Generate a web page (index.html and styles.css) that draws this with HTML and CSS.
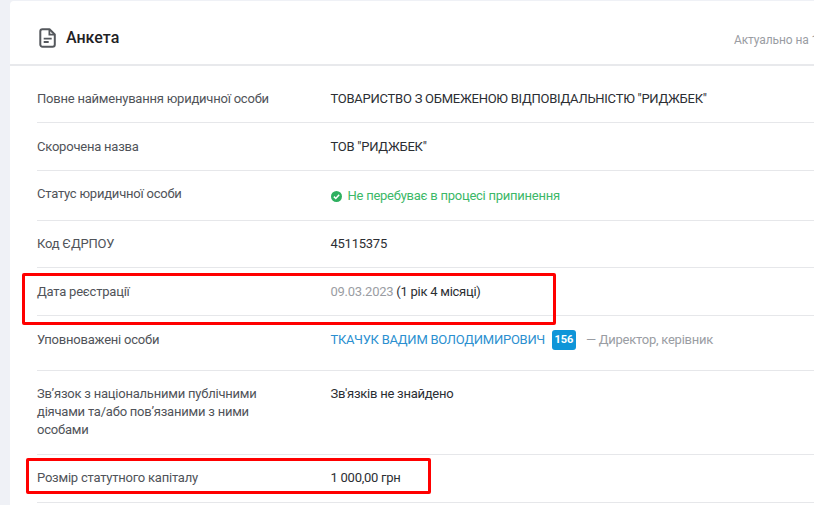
FILE: index.html
```html
<!DOCTYPE html>
<html lang="uk">
<head>
<meta charset="utf-8">
<title>Анкета</title>
<link rel="stylesheet" href="styles.css">
</head>
<body>
<main class="card">
  <header class="card-head">
    <div class="title">
      <svg class="doc-icon" width="18" height="20" viewBox="0 0 18 20" aria-hidden="true">
        <path d="M3.5 1.2h7l5.3 5.3v10.1c0 1.2-1 2.2-2.2 2.2H3.5c-1.2 0-2.2-1-2.2-2.2V3.4c0-1.2 1-2.2 2.2-2.2z" fill="none" stroke="#55585d" stroke-width="2" stroke-linejoin="round"/>
        <path d="M10.4 1.5v5.2h5.2" fill="none" stroke="#55585d" stroke-width="1.8"/>
        <path d="M4.7 10.6h8M4.7 14h5" fill="none" stroke="#55585d" stroke-width="1.8"/>
      </svg>
      <h1>Анкета</h1>
    </div>
    <span class="actual">Актуально на 12.07.2024</span>
  </header>
  <div class="rows">
    <div class="row row-low"><div class="label">Повне найменування юридичної особи</div><div class="value">ТОВАРИСТВО З ОБМЕЖЕНОЮ ВІДПОВІДАЛЬНІСТЮ "РИДЖБЕК"</div></div>
    <div class="row row-low"><div class="label">Скорочена назва</div><div class="value">ТОВ "РИДЖБЕК"</div></div>
    <div class="row row-status"><div class="label">Статус юридичної особи</div><div class="value status">
      <svg width="11" height="11" viewBox="0 0 11 11" aria-hidden="true"><circle cx="5.5" cy="5.5" r="5.5" fill="#2eb060"/><path d="M2.9 5.6l1.9 1.9 3.4-3.7" fill="none" stroke="#fff" stroke-width="1.5"/></svg>
      <span>Не перебуває в процесі припинення</span></div></div>
    <div class="row row-short"><div class="label">Код ЄДРПОУ</div><div class="value">45115375</div></div>
    <div class="row row-low"><div class="label">Дата реєстрації</div><div class="value"><span class="muted">09.03.2023</span> (1 рік 4 місяці)</div></div>
    <div class="row row-person"><div class="label">Уповноважені особи</div><div class="value person"><a class="link" href="#">ТКАЧУК ВАДИМ ВОЛОДИМИРОВИЧ</a><span class="badge">156</span><span class="muted">— Директор, керівник</span></div></div>
    <div class="row row-tall"><div class="label">Зв’язок з національними публічними діячами та/або пов’язаними з ними особами</div><div class="value">Зв'язків не знайдено</div></div>
    <div class="row"><div class="label">Розмір статутного капіталу</div><div class="value">1 000,00 грн</div></div>
  </div>
</main>
<div class="mark mark-date"></div>
<div class="mark mark-capital"></div>
</body>
</html>
```
FILE: styles.css
```css
* { box-sizing: border-box; }
html, body { margin: 0; height: 100%; overflow: hidden; }
body {
  position: relative;
  width: 814px;
  height: 505px;
  background: #eff1f6;
  font-family: Roboto, "Noto Sans", sans-serif;
  font-size: 13px;
  line-height: 18px;
  color: #2b2e33;
  padding: 1px 0 0 10px;
}
.card {
  width: 804px;
  height: 504px;
  overflow: hidden;
  background: #fff;
  border-radius: 4px 0 0 0;
}
.card-head {
  display: flex;
  justify-content: space-between;
  height: 65px;
  border-bottom: 2px solid #e8e9ec;
  padding: 28px 0 0 29px;
}
.title { display: flex; align-items: flex-start; gap: 9px; }
.doc-icon { margin-top: -1px; }
h1 {
  margin: 0;
  font-size: 16px;
  line-height: 18px;
  font-weight: 500;
  color: #1f2226;
}
.actual {
  color: #9a9da3;
  font-size: 12px;
  line-height: 16px;
  padding: 3px 0 0;
  width: 80px;
  white-space: nowrap;
  letter-spacing: -0.1px;
}
.rows { padding: 9px 0 0 27px; }
.row {
  display: flex;
  height: 48px;
  padding-top: 14px;
  border-bottom: 1px solid #e6e7ea;
  letter-spacing: -0.25px;
}
.row-low { padding-top: 15px; }
.row-status { height: 50px; }
.row-short { height: 47px; }
.row-person { height: 55px; padding-top: 15px; }
.row-tall { height: 84px; }
.label { width: 293.5px; flex: none; color: #505359; padding-right: 40px; letter-spacing: -0.22px; }
.value { flex: 1; }
.status { display: flex; align-items: flex-start; gap: 6px; color: #3cb868; padding-top: 2px; }
.status svg { margin-top: 4px; }
.muted { color: #9a9da3; }
.person { display: flex; align-items: flex-start; }
.link { color: #2b8fd0; text-decoration: none; }
.badge {
  margin: -1px 10px 0 7px;
  width: 24px;
  height: 20px;
  border-radius: 3px;
  background: #0f95d8;
  color: #fff;
  font-size: 11px;
  line-height: 19px;
  font-weight: 700;
  text-align: center;
  letter-spacing: 0;
}
.mark { position: absolute; border: 3px solid #f00; border-radius: 2px; }
.mark-date { left: 22px; top: 273px; width: 534px; height: 52px; }
.mark-capital { left: 26px; top: 458px; width: 405px; height: 36px; }
```
